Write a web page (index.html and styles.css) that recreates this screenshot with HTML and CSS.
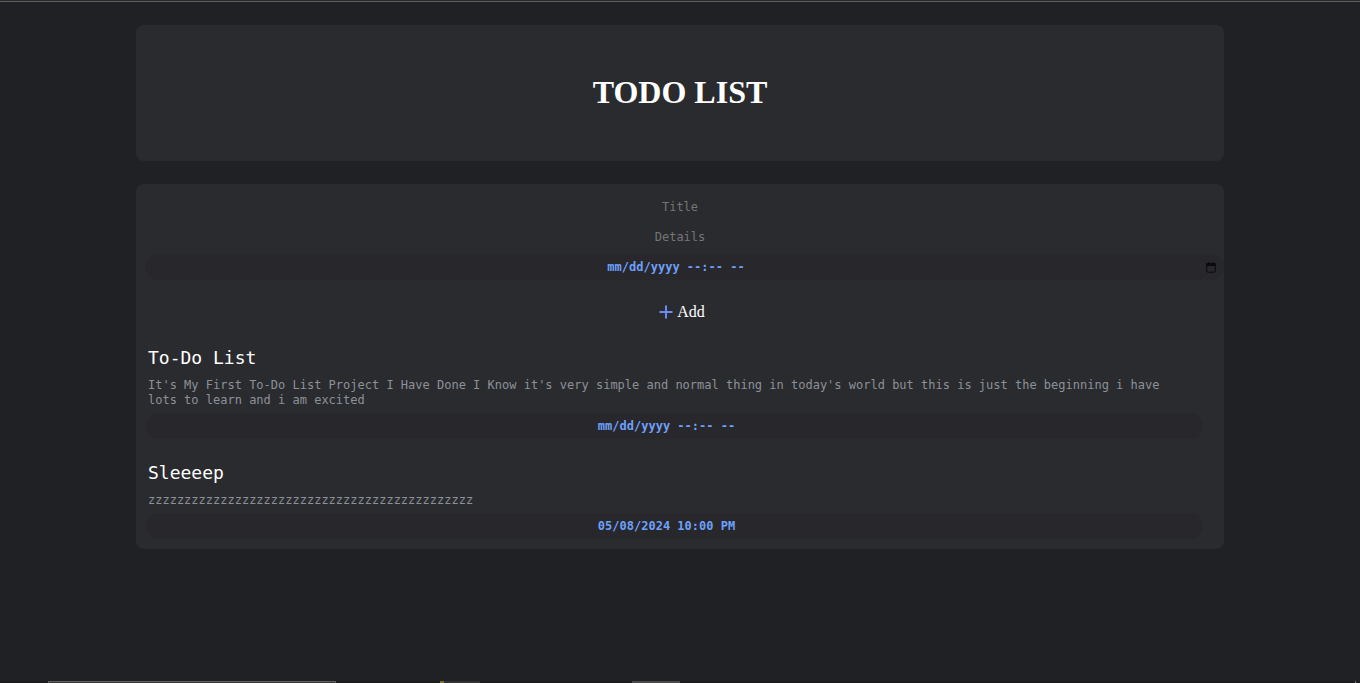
FILE: index.html
```html
<!DOCTYPE html>
<html lang="en">
<head>
<meta charset="utf-8">
<title>Todo List</title>
<link rel="stylesheet" href="styles.css">
</head>
<body>
<div class="top-edge"></div>
<main class="page">
  <header class="panel banner"><h1 class="banner-title">TODO LIST</h1></header>
  <section class="panel board">
    <form class="entry">
      <input class="field" type="text" placeholder="Title" aria-label="Title">
      <input class="field" type="text" placeholder="Details" aria-label="Details">
      <div class="date-row">
        <input class="date" type="text" value="mm/dd/yyyy --:-- --" aria-label="Due date">
        <button class="picker" type="button" aria-label="Open calendar">
          <svg width="10" height="11" viewBox="0 0 10 11" fill="none" stroke="#0b0b0c"><path d="M.8 2.5v6.7q0 1 1 1h6.4q1 0 1-1V2.5"/><path d="M.3 2.5h9.4" stroke-width="3"/><path d="M2.5 0v2M7.5 0v2"/></svg>
        </button>
      </div>
      <button class="add" type="button">
        <svg width="14" height="14" viewBox="0 0 14 14" fill="none" stroke="#7289f5" stroke-width="2"><path d="M7 .5v13M.5 7h13"/></svg>
        Add
      </button>
    </form>
    <article class="todo">
      <h2 class="todo-title">To-Do List</h2>
      <p class="todo-text">It's My First To-Do List Project I Have Done I Know it's very simple and normal thing in today's world but this is just the beginning i have lots to learn and i am excited</p>
      <input class="date" type="text" value="mm/dd/yyyy --:-- --" readonly aria-label="To-Do List due date">
    </article>
    <article class="todo">
      <h2 class="todo-title">Sleeeep</h2>
      <p class="todo-text">zzzzzzzzzzzzzzzzzzzzzzzzzzzzzzzzzzzzzzzzzzzzz</p>
      <input class="date" type="text" value="05/08/2024 10:00 PM" readonly aria-label="Sleeeep due date">
    </article>
  </section>
</main>
<footer class="bottom-edge">
  <span class="edge-search"></span>
  <span class="edge-app"></span>
  <span class="edge-active"></span>
  <span class="edge-end"></span>
</footer>
</body>
</html>
```
FILE: styles.css
```css
* { box-sizing: border-box; }
body {
  margin: 0;
  min-height: 100vh;
  display: flex;
  flex-direction: column;
  background: #202124;
  color: #fff;
  font-family: "DejaVu Sans Mono", monospace;
}
.top-edge { height: 2px; background: #5d5d5e; border-top: 1px solid #29292a; }
.page {
  width: 80%;
  margin: 23px auto;
  display: flex;
  flex-direction: column;
  gap: 23px;
}
.panel { background: #2a2b2f; border-radius: 8px; }
.banner { padding: 49px 16px 51px; text-align: center; }
.banner-title { margin: 0; font: bold 32px/36px "Liberation Serif", serif; }
.board { padding: 10px 0; }
.entry { display: flex; flex-direction: column; align-items: center; }
.field {
  width: 100%;
  height: 26px;
  margin-bottom: 4px;
  padding: 0;
  border: 0;
  outline: 0;
  background: transparent;
  color: #fff;
  text-align: center;
  font: 12px/15px "DejaVu Sans Mono", monospace;
}
.field::placeholder { color: #757575; opacity: 1; }
.date {
  display: block;
  width: 100%;
  height: 26px;
  padding: 0 16px 0 0;
  border: 0;
  border-radius: 13px;
  outline: 0;
  background: #28272b;
  color: #6ea0fa;
  text-align: center;
  font: bold 12px/15px "DejaVu Sans Mono", monospace;
}
.date-row {
  align-self: stretch;
  display: flex;
  align-items: center;
  margin-left: 10px;
  background: #28272b;
  border-radius: 13px;
}
.date-row .date { flex: 1; min-width: 0; padding: 0; }
.picker { display: flex; padding: 0; margin-right: 8px; border: 0; background: none; }
.add {
  display: flex;
  align-items: center;
  gap: 4px;
  margin: 22px 0 24px;
  padding: 0 0 0 4px;
  border: 0;
  background: none;
  color: #fff;
  font: 16px/20px "Liberation Serif", serif;
}
.todo { padding: 0 21px 0 10px; }
.todo + .todo { margin-top: 22px; }
.todo-title { margin: 0; padding-left: 2px; font-size: 18px; line-height: 24px; font-weight: 400; }
.todo-text {
  margin: 8px 0 5px;
  padding: 0 24px 0 2px;
  color: #8c9198;
  font-size: 12px;
  line-height: 15px;
}
.bottom-edge { height: 2px; margin-top: auto; display: flex; background: #1c1b1d; }
.edge-search { width: 288px; margin-left: 48px; background: #383838; border: solid #606060; border-width: 1px 1px 0; }
.edge-app { width: 40px; margin-left: 104px; background: #333; border-left: 4px solid #7c722f; }
.edge-active { width: 48px; margin-left: 152px; background: #4c4b4b; }
.edge-end { width: 1px; margin: 0 4px 0 auto; background: #777; }
```
